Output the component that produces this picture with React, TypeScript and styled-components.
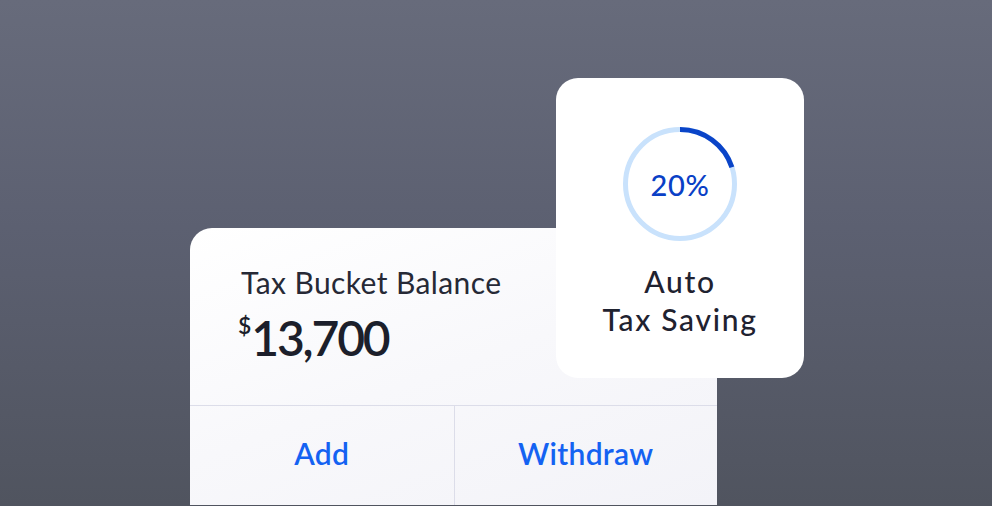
import React from "react";
import styled, { createGlobalStyle } from "styled-components";

const GlobalStyle = createGlobalStyle`
  html, body {
    margin: 0;
    padding: 0;
    width: 992px;
    height: 506px;
    overflow: hidden;
  }
  body {
    font-family: Lato, "Open Sans", sans-serif;
    background: linear-gradient(180deg, #676b7b 0%, #5c6071 45%, #50545f 100%);
  }
`;

const Stage = styled.main`
  position: relative;
  width: 992px;
  height: 506px;
  overflow: hidden;
  padding: 228px 0 0 190px;
  box-sizing: border-box;
`;

const BalanceCard = styled.section`
  width: 527px;
  height: 277px;
  border-radius: 22px 22px 0 0;
  background: linear-gradient(160deg, #ffffff 0%, #f8f8fb 50%, #f3f3f8 100%);
  display: flex;
  flex-direction: column;
  overflow: hidden;
`;

const BalanceTop = styled.div`
  height: 178px;
  box-sizing: border-box;
  padding: 37px 0 0 51px;
  border-bottom: 1.5px solid #dcdde9;
`;

const Title = styled.div`
  font-size: 30px;
  line-height: 34px;
  color: #262936;
  font-weight: 400;
  letter-spacing: 0.4px;
`;

const Amount = styled.div`
  margin: 13px 0 0 -3px;
  display: flex;
  align-items: flex-start;
  color: #1c1f2b;
  font-weight: 600;
`;

const Currency = styled.span`
  font-size: 23px;
  line-height: 26px;
  margin-top: 0;
  margin-right: 0;
`;

const Digits = styled.span`
  font-size: 48px;
  line-height: 52px;
  letter-spacing: -2.2px;
`;

const Actions = styled.div`
  flex: 1;
  display: grid;
  grid-template-columns: 1fr 1fr;
`;

const ActionButton = styled.button<{ $divider?: boolean }>`
  border: none;
  background: transparent;
  font-family: inherit;
  font-size: 30px;
  font-weight: 600;
  letter-spacing: 0.3px;
  color: #1462f2;
  padding: 0 0 5px 0;
  display: flex;
  align-items: center;
  justify-content: center;
  border-left: ${(p) => (p.$divider ? "1.5px solid #dcdde9" : "none")};
  cursor: pointer;
`;

const SavingCard = styled.aside`
  position: absolute;
  left: 556px;
  top: 78px;
  width: 248px;
  height: 300px;
  border-radius: 22px;
  background: #ffffff;
  display: flex;
  flex-direction: column;
  align-items: center;
  box-sizing: border-box;
  padding-top: 47px;
`;

const Ring = styled.div`
  position: relative;
  width: 118px;
  height: 118px;
  display: flex;
  align-items: center;
  justify-content: center;
`;

const RingSvg = styled.svg`
  position: absolute;
  inset: 0;
`;

const Percent = styled.span`
  position: relative;
  font-size: 29px;
  font-weight: 500;
  letter-spacing: 0.6px;
  color: #0a40c6;
`;

const SavingLabel = styled.div`
  margin-top: 19px;
  text-align: center;
  font-size: 30px;
  line-height: 38px;
  font-weight: 500;
  letter-spacing: 1.7px;
  color: #1f2230;
`;

export default function App() {
  const r = 54.5;
  const c = 2 * Math.PI * r;
  return (
    <>
      <GlobalStyle />
      <Stage>
        <BalanceCard>
          <BalanceTop>
            <Title>Tax Bucket Balance</Title>
            <Amount>
              <Currency>$</Currency>
              <Digits>13,700</Digits>
            </Amount>
          </BalanceTop>
          <Actions>
            <ActionButton>Add</ActionButton>
            <ActionButton $divider>Withdraw</ActionButton>
          </Actions>
        </BalanceCard>
        <SavingCard>
          <Ring>
            <RingSvg width="118" height="118" viewBox="0 0 118 118">
              <circle cx="59" cy="59" r={r} fill="none" stroke="#c9e2fc" strokeWidth="5" />
              <circle
                cx="59"
                cy="59"
                r={r}
                fill="none"
                stroke="#0a44c8"
                strokeWidth="5"
                strokeDasharray={`${c * 0.2} ${c}`}
                transform="rotate(-90 59 59)"
              />
            </RingSvg>
            <Percent>20%</Percent>
          </Ring>
          <SavingLabel>
            Auto
            <br />
            Tax Saving
          </SavingLabel>
        </SavingCard>
      </Stage>
    </>
  );
}
